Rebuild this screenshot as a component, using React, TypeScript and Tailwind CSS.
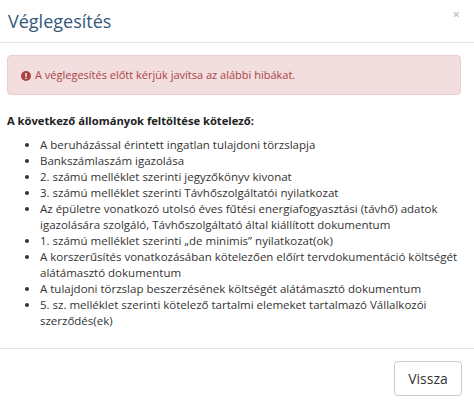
export default function App() {
  const items = [
    "A beruházással érintett ingatlan tulajdoni törzslapja",
    "Bankszámlaszám igazolása",
    "2. számú melléklet szerinti jegyzőkönyv kivonat",
    "3. számú melléklet szerinti Távhőszolgáltatói nyilatkozat",
    "Az épületre vonatkozó utolsó éves fűtési energiafogyasztási (távhő) adatok igazolására szolgáló, Távhőszolgáltató által kiállított dokumentum",
    "1. számú melléklet szerinti „de minimis” nyilatkozat(ok)",
    "A korszerűsítés vonatkozásában kötelezően előírt tervdokumentáció költségét alátámasztó dokumentum",
    "A tulajdoni törzslap beszerzésének költségét alátámasztó dokumentum",
    "5. sz. melléklet szerinti kötelező tartalmi elemeket tartalmazó Vállalkozói szerződés(ek)",
  ];

  return (
    <div className="flex h-[409px] w-[474px] flex-col bg-white font-['Open_Sans',sans-serif] text-[#333]">
      {/* header */}
      <div className="flex h-[43px] items-center justify-between border-b border-[#e5e5e5] pl-[8px] pr-[14px]">
        <h4 className="text-[18px] leading-none text-[#34597d]">Véglegesítés</h4>
        <button className="mb-[14px] text-[13px] font-bold leading-none text-[#c8c8c8]">×</button>
      </div>

      {/* body */}
      <div className="flex-1 pl-[7px] pr-[13px] pt-[12px]">
        <div className="flex h-[40px] items-center gap-[4px] rounded-[4px] border border-[#ebccd1] bg-[#f2dede] pl-[13px] pt-[1px] text-[11px] text-[#a94442]">
          <svg width="10" height="10" viewBox="0 0 10 10">
            <circle cx="5" cy="5" r="5" fill="#a94442" />
            <rect x="4.2" y="2" width="1.6" height="3.8" rx="0.5" fill="#f2dede" />
            <rect x="4.2" y="6.6" width="1.6" height="1.5" rx="0.4" fill="#f2dede" />
          </svg>
          <span>A véglegesítés előtt kérjük javítsa az alábbi hibákat.</span>
        </div>

        <p className="mt-[18px] text-[11.2px] font-bold leading-[16px] text-[#222]">
          A következő állományok feltöltése kötelező:
        </p>

        <ul className="-mr-[12px] mt-[8px] list-disc pl-[33px] text-[11.5px] leading-[16px] text-[#333]">
          {items.map((t) => (
            <li key={t}>{t}</li>
          ))}
        </ul>
      </div>

      {/* footer */}
      <div className="flex h-[61px] items-start justify-end border-t border-[#e5e5e5] pr-[12px] pt-[12px]">
        <button className="h-[35px] w-[68px] rounded-[4px] border border-[#ccc] bg-white text-[14px] text-[#333]">
          Vissza
        </button>
      </div>
    </div>
  );
}
